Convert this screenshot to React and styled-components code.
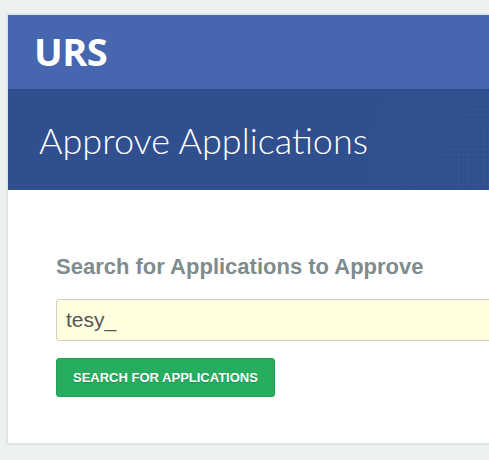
import React from 'react';
import styled, { createGlobalStyle } from 'styled-components';

const GlobalStyle = createGlobalStyle`
  html, body {
    margin: 0;
    padding: 0;
    background: #ecf0f1;
    overflow: hidden;
  }
  body {
    font-family: "Liberation Sans", Arial, sans-serif;
  }
`;

const Page = styled.div`
  padding: 13px 0 0 6px;
  width: 489px;
  height: 460px;
  box-sizing: border-box;
  overflow: hidden;
`;

const Card = styled.div`
  width: 540px;
  border: 2px solid #e1e5e6;
  border-right: none;
  background: #fff;
`;

const TopBar = styled.header`
  height: 74px;
  background: #4666b0;
  border-bottom: 1px solid #2b4886;
  display: flex;
  align-items: center;
  padding-left: 26px;
`;

const Logo = styled.div`
  font-family: "Open Sans", sans-serif;
  font-weight: 700;
  font-size: 38px;
  color: #fff;
  letter-spacing: -0.5px;
  margin-top: -2px;
`;

const TitleBand = styled.div`
  position: relative;
  height: 100px;
  background: #2f4f8f;
  display: flex;
  align-items: center;
  padding-left: 31px;
  overflow: hidden;
  &::after {
    content: '';
    position: absolute;
    inset: 0;
    background-image:
      repeating-linear-gradient(90deg, rgba(255,255,255,0.04) 0 1px, transparent 1px 5px),
      repeating-linear-gradient(0deg, rgba(255,255,255,0.04) 0 1px, transparent 1px 5px);
    -webkit-mask-image: radial-gradient(circle at 100% 100%, #000 0, transparent 200px);
    mask-image: radial-gradient(circle at 100% 100%, #000 0, transparent 200px);
  }
`;

const Title = styled.h1`
  margin: 0;
  font-family: Lato, sans-serif;
  font-weight: 300;
  font-size: 36px;
  color: #fff;
`;

const Body = styled.div`
  padding: 64px 0 46px 48px;
`;

const SectionHeading = styled.h2`
  margin: 0 0 20px;
  font-size: 22px;
  line-height: 25px;
  font-weight: 700;
  color: #7f8c8d;
`;

const SearchInput = styled.input`
  display: block;
  box-sizing: border-box;
  width: 100%;
  height: 42px;
  padding: 0 9px;
  border: 1px solid #cfcfc4;
  border-right: none;
  border-radius: 4px 0 0 4px;
  background: #ffffdf;
  font-family: "Liberation Sans", Arial, sans-serif;
  font-size: 21px;
  color: #555;
  outline: none;
`;

const Button = styled.button`
  display: block;
  margin-top: 17px;
  height: 39px;
  padding: 0 16px;
  border: 1px solid #21a055;
  border-radius: 3px;
  background: #27ad60;
  color: #fff;
  font-family: "Liberation Sans", Arial, sans-serif;
  font-size: 13px;
  font-weight: 700;
  text-transform: uppercase;
  text-shadow: 0 1px 1px rgba(0, 0, 0, 0.2);
`;

export default function App() {
  return (
    <Page>
      <GlobalStyle />
      <Card>
        <TopBar>
          <Logo>URS</Logo>
        </TopBar>
        <TitleBand>
          <Title>Approve Applications</Title>
        </TitleBand>
        <Body>
          <SectionHeading>Search for Applications to Approve</SectionHeading>
          <SearchInput defaultValue="tesy_" />
          <Button>Search for Applications</Button>
        </Body>
      </Card>
    </Page>
  );
}
